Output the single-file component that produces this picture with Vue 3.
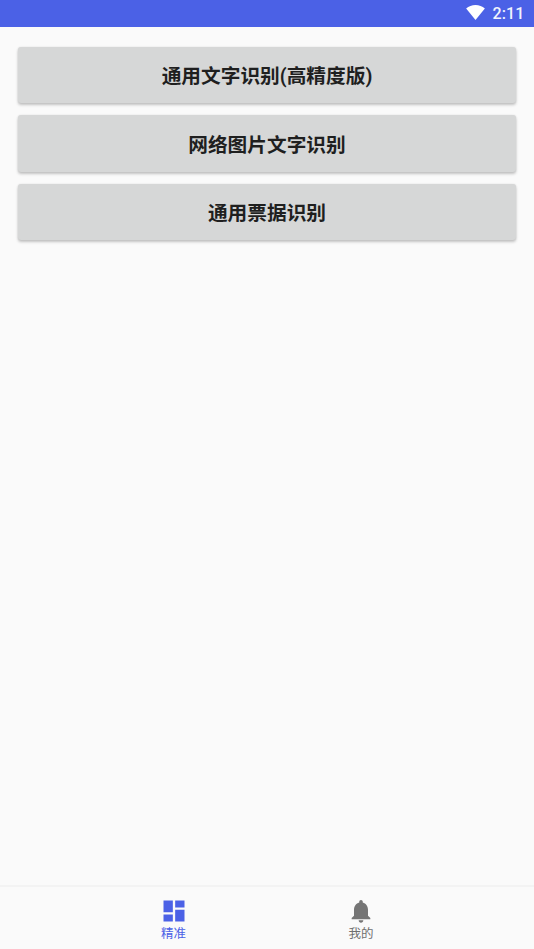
<script setup>
const buttons = ['通用文字识别(高精度版)', '网络图片文字识别', '通用票据识别']
</script>

<template>
  <div class="screen">
    <header class="status">
      <svg class="wifi" viewBox="0 0 20 16" width="19" height="15" aria-hidden="true">
        <path d="M0 3.6C2.8 1.3 6.2 0 10 0s7.2 1.3 10 3.6L10 16z" fill="#fff" />
      </svg>
      <span class="time">2:11</span>
    </header>

    <main class="list">
      <button v-for="b in buttons" :key="b" class="btn" type="button">{{ b }}</button>
    </main>

    <nav class="tabs">
      <div class="tab active">
        <svg viewBox="0 0 24 24" width="28" height="28" aria-hidden="true">
          <path d="M3 13h8V3H3v10zm0 8h8v-6H3v6zm10 0h8V11h-8v10zm0-18v6h8V3h-8z" fill="#4b61e6" />
        </svg>
        <span>精准</span>
      </div>
      <div class="tab">
        <svg viewBox="0 0 24 24" width="28" height="28" aria-hidden="true">
          <path d="M12 22c1.1 0 2-.9 2-2h-4c0 1.100.9 2 2 2zm6-6v-5c0-3.070-1.630-5.640-4.500-6.320V4c0-.83-.67-1.500-1.500-1.500s-1.500.67-1.500 1.500v.68C7.640 5.360 6 7.920 6 11v5l-2 2v1h16v-1l-2-2z" fill="#757575" />
        </svg>
        <span>我的</span>
      </div>
    </nav>
  </div>
</template>

<style scoped>
.screen {
  width: 534px;
  height: 949px;
  display: flex;
  flex-direction: column;
  background: #fafafa;
  font-family: Roboto, "Noto Sans CJK SC", sans-serif;
  overflow: hidden;
}
.status {
  height: 27px;
  flex: none;
  background: #4b61e6;
  display: flex;
  align-items: center;
  justify-content: flex-end;
  padding-right: 9.5px;
  gap: 7.5px;
  color: #fff;
  box-sizing: border-box;
}
.wifi {
  margin-top: -2px;
}
.time {
  font-size: 16px;
  font-weight: 500;
  letter-spacing: 0.1px;
  color: #f1f3fd;
}
.list {
  flex: 1;
  display: flex;
  flex-direction: column;
  gap: 12px;
  padding: 20px 18px 0;
}
.btn {
  height: 56.4px;
  border: 0;
  border-radius: 3px;
  background: #d6d7d7;
  color: #1f1f1f;
  font-family: inherit;
  font-size: 19.7px;
  font-weight: 700;
  box-shadow: 0 2px 3px rgba(0, 0, 0, 0.22), 0 0 2px rgba(0, 0, 0, 0.1);
  padding: 0 0 1px;
}
.tabs {
  height: 64px;
  flex: none;
  box-sizing: border-box;
  border-top: 2px solid #f3f3f3;
  display: grid;
  grid-template-columns: 1fr 1fr;
  padding: 0 79.25px 0 79.75px;
}
.tab {
  display: flex;
  flex-direction: column;
  align-items: center;
  padding-top: 10px;
  font-size: 12.5px;
  line-height: 16px;
  color: #6f6f6f;
}
.tab svg {
  display: block;
}
.tab span {
  margin-top: 1px;
}
.tab.active {
  color: #4b61e6;
}
</style>
